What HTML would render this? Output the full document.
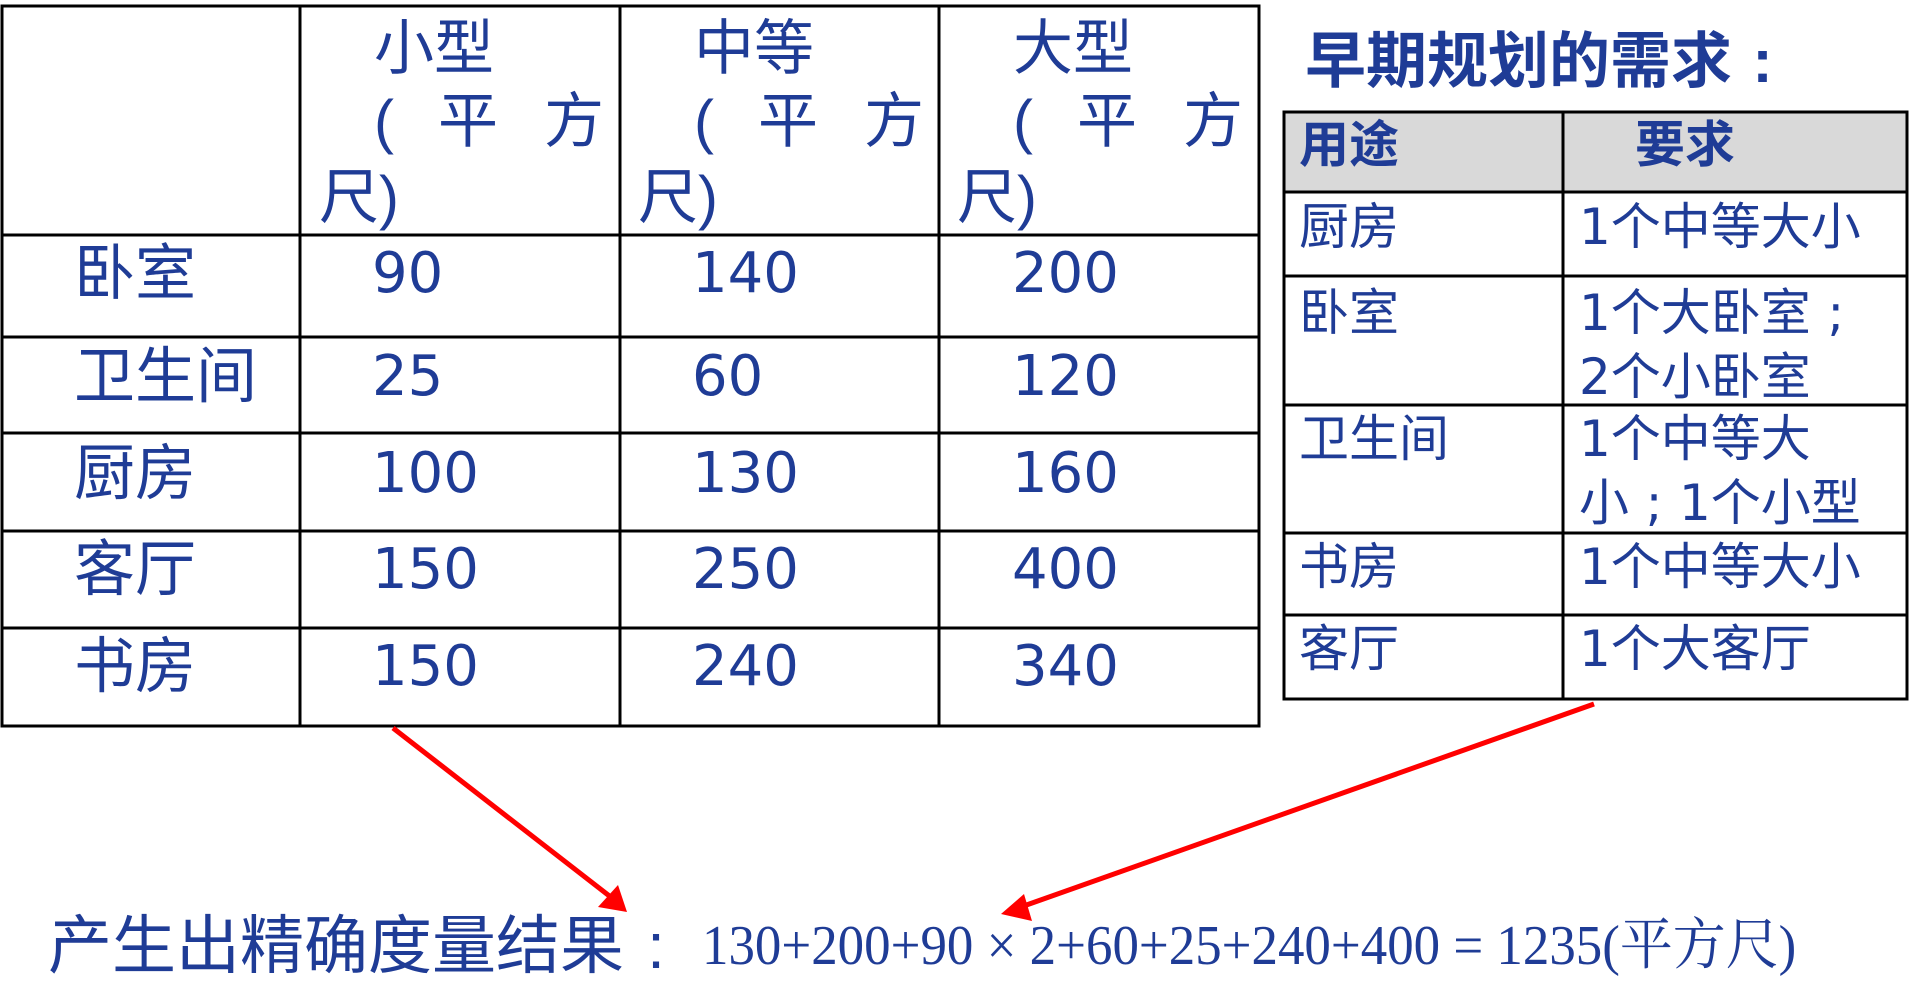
<!DOCTYPE html>
<html><head><meta charset="utf-8"><style>
body{margin:0;width:1909px;height:993px;background:#fff;position:relative;overflow:hidden;font-family:"Liberation Sans","DejaVu Sans","Noto Sans CJK SC",sans-serif;color:#1f3c96}
.t{position:absolute;white-space:nowrap;line-height:1}
.a{font-size:60px}
.n{font-family:"DejaVu Sans","Noto Sans CJK SC",sans-serif;font-size:56px}
.r{font-size:50px;font-family:"DejaVu Sans","Noto Sans CJK SC",sans-serif}
.b{font-weight:bold}
.p{display:inline-block;width:1em;text-align:center}
</style></head><body>
<svg width="1909" height="993" style="position:absolute;left:0;top:0">
<rect x="1284" y="112" width="623" height="80" fill="#d9d9d9"/>
<g stroke="#000" stroke-width="3" fill="none">
<rect x="2" y="6" width="1257" height="720"/>
<line x1="300" y1="6" x2="300" y2="726"/><line x1="620" y1="6" x2="620" y2="726"/><line x1="939" y1="6" x2="939" y2="726"/>
<line x1="2" y1="235" x2="1259" y2="235"/><line x1="2" y1="337" x2="1259" y2="337"/><line x1="2" y1="433" x2="1259" y2="433"/><line x1="2" y1="531" x2="1259" y2="531"/><line x1="2" y1="628" x2="1259" y2="628"/>
<rect x="1284" y="112" width="623" height="587"/>
<line x1="1563" y1="112" x2="1563" y2="699"/>
<line x1="1284" y1="192" x2="1907" y2="192"/><line x1="1284" y1="276" x2="1907" y2="276"/><line x1="1284" y1="405" x2="1907" y2="405"/><line x1="1284" y1="533" x2="1907" y2="533"/><line x1="1284" y1="615" x2="1907" y2="615"/>
</g>
<g stroke="#f00" stroke-width="5">
<line x1="393" y1="728" x2="612" y2="898"/>
<line x1="1594" y1="704" x2="1018" y2="908"/>
</g>
<polygon points="627,912 598,907 618,885" fill="#f00"/>
<polygon points="1001,914 1024,894 1032,921" fill="#f00"/>
</svg>

<div class="t a" style="left:374px;top:19px">小型</div>
<div class="t a" style="left:694px;top:19px">中等</div>
<div class="t a" style="left:1013px;top:19px">大型</div>
<div class="t a" style="left:374px;top:92px">(</div><div class="t a" style="left:438px;top:92px">平</div><div class="t a" style="left:544px;top:92px">方</div>
<div class="t a" style="left:694px;top:92px">(</div><div class="t a" style="left:758px;top:92px">平</div><div class="t a" style="left:864px;top:92px">方</div>
<div class="t a" style="left:1013px;top:92px">(</div><div class="t a" style="left:1077px;top:92px">平</div><div class="t a" style="left:1183px;top:92px">方</div>
<div class="t a" style="left:319px;top:168px">尺)</div>
<div class="t a" style="left:638px;top:168px">尺)</div>
<div class="t a" style="left:957px;top:168px">尺)</div>

<div class="t a" style="left:74px;top:243px;font-size:61px">卧室</div>
<div class="t a" style="left:74px;top:346px;font-size:61px">卫生间</div>
<div class="t a" style="left:74px;top:443px;font-size:61px">厨房</div>
<div class="t a" style="left:74px;top:539px;font-size:61px">客厅</div>
<div class="t a" style="left:74px;top:636px;font-size:61px">书房</div>

<div class="t n" style="left:372px;top:246px">90</div><div class="t n" style="left:692px;top:246px">140</div><div class="t n" style="left:1012px;top:246px">200</div>
<div class="t n" style="left:372px;top:349px">25</div><div class="t n" style="left:692px;top:349px">60</div><div class="t n" style="left:1012px;top:349px">120</div>
<div class="t n" style="left:372px;top:446px">100</div><div class="t n" style="left:692px;top:446px">130</div><div class="t n" style="left:1012px;top:446px">160</div>
<div class="t n" style="left:372px;top:542px">150</div><div class="t n" style="left:692px;top:542px">250</div><div class="t n" style="left:1012px;top:542px">400</div>
<div class="t n" style="left:372px;top:639px">150</div><div class="t n" style="left:692px;top:639px">240</div><div class="t n" style="left:1012px;top:639px">340</div>

<div class="t a b" style="left:1305px;top:31px;font-size:61px">早期规划的需求<span class="p">:</span></div>
<div class="t r b" style="left:1299px;top:120px">用途</div>
<div class="t r b" style="left:1635px;top:120px">要求</div>
<div class="t r" style="left:1299px;top:202px">厨房</div><div class="t r" style="left:1579px;top:202px">1个中等大小</div>
<div class="t r" style="left:1299px;top:288px">卧室</div><div class="t r" style="left:1579px;top:288px">1个大卧室<span class="p">;</span></div>
<div class="t r" style="left:1579px;top:352px">2个小卧室</div>
<div class="t r" style="left:1299px;top:414px">卫生间</div><div class="t r" style="left:1579px;top:414px">1个中等大</div>
<div class="t r" style="left:1579px;top:478px">小<span class="p">;</span>1个小型</div>
<div class="t r" style="left:1299px;top:542px">书房</div><div class="t r" style="left:1579px;top:542px">1个中等大小</div>
<div class="t r" style="left:1299px;top:624px">客厅</div><div class="t r" style="left:1579px;top:624px">1个大客厅</div>

<div class="t a" style="left:48px;top:914px;font-size:64px">产生出精确度量结果<span class="p">:</span></div>
<div class="t" style="left:702px;top:918px;font-size:56px;font-family:'Liberation Serif','Noto Serif CJK SC',serif;transform:scaleX(0.945);transform-origin:0 0">130+200+90 × 2+60+25+240+400 = 1235(平方尺)</div>
</body></html>
